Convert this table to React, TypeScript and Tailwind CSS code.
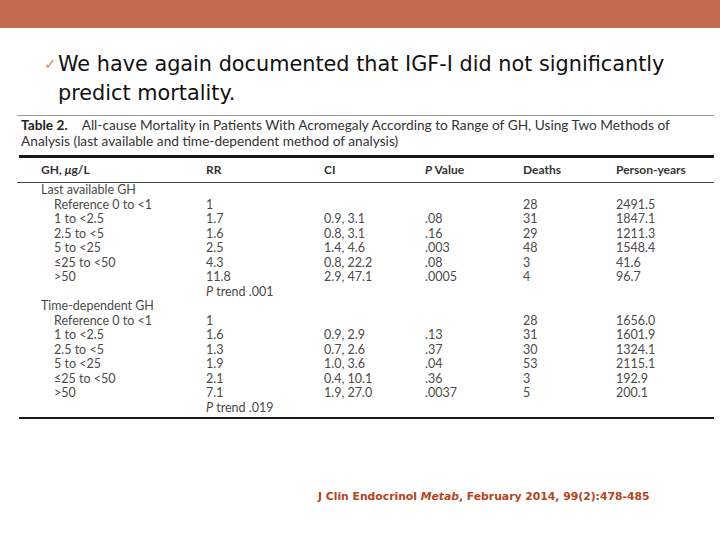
import React from 'react';

type Row = { label: string; indent?: boolean; rr?: string; ci?: string; p?: string; deaths?: string; py?: string; trend?: string };

const rows: Row[] = [
  { label: 'Last available GH' },
  { label: 'Reference 0 to <1', indent: true, rr: '1', deaths: '28', py: '2491.5' },
  { label: '1 to <2.5', indent: true, rr: '1.7', ci: '0.9, 3.1', p: '.08', deaths: '31', py: '1847.1' },
  { label: '2.5 to <5', indent: true, rr: '1.6', ci: '0.8, 3.1', p: '.16', deaths: '29', py: '1211.3' },
  { label: '5 to <25', indent: true, rr: '2.5', ci: '1.4, 4.6', p: '.003', deaths: '48', py: '1548.4' },
  { label: '≤25 to <50', indent: true, rr: '4.3', ci: '0.8, 22.2', p: '.08', deaths: '3', py: '41.6' },
  { label: '>50', indent: true, rr: '11.8', ci: '2.9, 47.1', p: '.0005', deaths: '4', py: '96.7' },
  { label: '', trend: '.001' },
  { label: 'Time-dependent GH' },
  { label: 'Reference 0 to <1', indent: true, rr: '1', deaths: '28', py: '1656.0' },
  { label: '1 to <2.5', indent: true, rr: '1.6', ci: '0.9, 2.9', p: '.13', deaths: '31', py: '1601.9' },
  { label: '2.5 to <5', indent: true, rr: '1.3', ci: '0.7, 2.6', p: '.37', deaths: '30', py: '1324.1' },
  { label: '5 to <25', indent: true, rr: '1.9', ci: '1.0, 3.6', p: '.04', deaths: '53', py: '2115.1' },
  { label: '≤25 to <50', indent: true, rr: '2.1', ci: '0.4, 10.1', p: '.36', deaths: '3', py: '192.9' },
  { label: '>50', indent: true, rr: '7.1', ci: '1.9, 27.0', p: '.0037', deaths: '5', py: '200.1' },
  { label: '', trend: '.019' },
];

const grid = 'grid grid-cols-[165px_118px_101px_98px_93px_1fr] pl-[24px]';

export default function App() {
  return (
    <div className="w-[720px] h-[540px] bg-white overflow-hidden">
      <div className="h-[28px] bg-[#c46a51]" />

      <div className="flex pl-[44px] pt-[22px] pr-2 font-['DejaVu_Sans',sans-serif] text-[20.8px] leading-[29px] text-[#111]">
        <span className="w-[14px] shrink-0 text-[15px] text-[#d08a5c]">✓</span>
        <p className="whitespace-nowrap">
          We have again documented that IGF-I did not significantly
          <br />
          predict mortality.
        </p>
      </div>

      <div className="ml-[17px] mt-[7px] w-[697px] border-t border-[#9a9a9a] font-['Lato',sans-serif]">
        <div className="pt-[1px] pl-[4px] text-[13.7px] leading-[16px] text-[#333]">
          <div>
            <span className="font-bold text-[#222]">Table 2.</span>
            <span className="ml-[14px]">All-cause Mortality in Patients With Acromegaly According to Range of GH, Using Two Methods of</span>
          </div>
          <div>Analysis (last available and time-dependent method of analysis)</div>
        </div>

        <div className="mt-[6px] ml-[2px] h-[3px] bg-[#1a1a1a]" />

        <div className={`${grid} h-[25px] items-center border-b border-[#444] text-[12px] font-bold text-[#333]`}>
          <div>GH, <span className="italic">μ</span>g/L</div>
          <div>RR</div>
          <div>CI</div>
          <div><span className="italic">P</span> Value</div>
          <div>Deaths</div>
          <div>Person-years</div>
        </div>

        <div className="pb-[2px] text-[12.5px] text-[#4a4a4a]">
          {rows.map((r, i) => (
            <div key={i} className={`${grid} h-[14.5px] leading-[14.5px] whitespace-nowrap`}>
              <div className={r.indent ? 'pl-[13px]' : ''}>{r.label}</div>
              <div>
                {r.trend ? (
                  <>
                    <span className="italic">P</span> trend {r.trend}
                  </>
                ) : (
                  r.rr
                )}
              </div>
              <div>{r.ci}</div>
              <div>{r.p}</div>
              <div>{r.deaths}</div>
              <div>{r.py}</div>
            </div>
          ))}
        </div>

        <div className="ml-[2px] h-[2px] bg-[#1a1a1a]" />
      </div>

      <div className="mt-[70px] pl-[318px] font-['DejaVu_Sans',sans-serif] font-bold text-[10.8px] text-[#b5431c]">
        J Clin Endocrinol <span className="italic">Metab</span>, February 2014, 99(2):478-485
      </div>
    </div>
  );
}
